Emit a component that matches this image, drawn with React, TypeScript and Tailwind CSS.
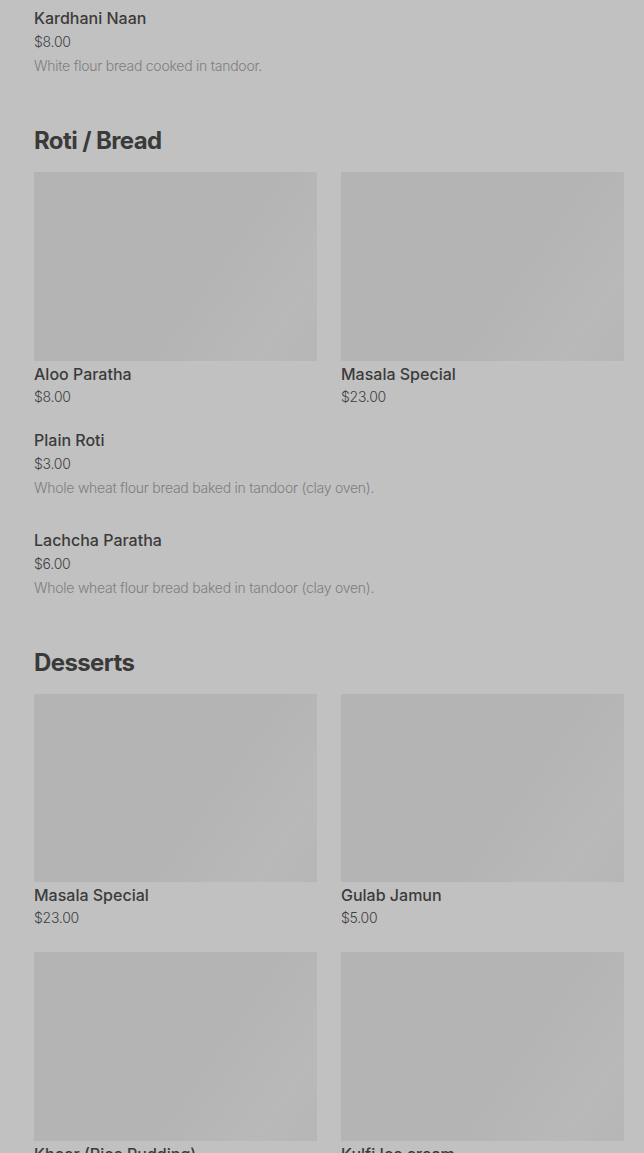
import React from "react";

type Card = { name: string; price: string };
type Item = { name: string; price: string; desc: string };

function GridCard({ c }: { c: Card }) {
  return (
    <div className="flex flex-col">
      <div className="aspect-[3/2] w-full bg-[linear-gradient(125deg,#b4b4b4_0%,#b4b4b4_60%,#b9b9b9_85%,#b6b6b6_100%)]" />
      <div className="mt-[1px] text-[16px] leading-6 font-medium text-[#3b3b3b]">{c.name}</div>
      <div className="-mt-[1px] text-[14px] leading-6 font-light tracking-[-0.25px] text-[#3f3f3f]">{c.price}</div>
    </div>
  );
}

function ListItem({ it }: { it: Item }) {
  return (
    <div className="flex flex-col">
      <div className="text-[16px] leading-6 font-medium text-[#3b3b3b]">{it.name}</div>
      <div className="text-[14px] leading-6 font-light tracking-[-0.25px] text-[#3f3f3f]">{it.price}</div>
      <div className="text-[14px] leading-6 font-light tracking-[-0.25px] text-[#7e7e7e]">{it.desc}</div>
    </div>
  );
}

export default function App() {
  const font = { fontFamily: "Inter, 'Noto Sans', sans-serif" };
  return (
    <div className="min-h-[1153px] w-full bg-[#c1c1c1] overflow-hidden" style={font}>
      <div className="pl-[34px] pr-[20px] pt-[6px]">
        <ListItem
          it={{ name: "Kardhani Naan", price: "$8.00", desc: "White flour bread cooked in tandoor." }}
        />

        <h2 className="mt-[47px] text-[24px] leading-8 font-bold text-[#3a3a3a] tracking-[-0.6px]">Roti / Bread</h2>
        <div className="mt-[15px] grid grid-cols-2 gap-x-6 gap-y-[21px]">
          <GridCard c={{ name: "Aloo Paratha", price: "$8.00" }} />
          <GridCard c={{ name: "Masala Special", price: "$23.00" }} />
        </div>
        <div className="mt-[19px] flex flex-col gap-[28px]">
          <ListItem
            it={{ name: "Plain Roti", price: "$3.00", desc: "Whole wheat flour bread baked in tandoor (clay oven)." }}
          />
          <ListItem
            it={{ name: "Lachcha Paratha", price: "$6.00", desc: "Whole wheat flour bread baked in tandoor (clay oven)." }}
          />
        </div>

        <h2 className="mt-[47px] text-[24px] leading-8 font-bold text-[#3a3a3a] tracking-[-0.6px]">Desserts</h2>
        <div className="mt-[15px] grid grid-cols-2 gap-x-6 gap-y-[22px]">
          <GridCard c={{ name: "Masala Special", price: "$23.00" }} />
          <GridCard c={{ name: "Gulab Jamun", price: "$5.00" }} />
          <GridCard c={{ name: "Kheer (Rice Pudding)", price: "$6.00" }} />
          <GridCard c={{ name: "Kulfi Ice cream", price: "$6.00" }} />
        </div>
      </div>
    </div>
  );
}
